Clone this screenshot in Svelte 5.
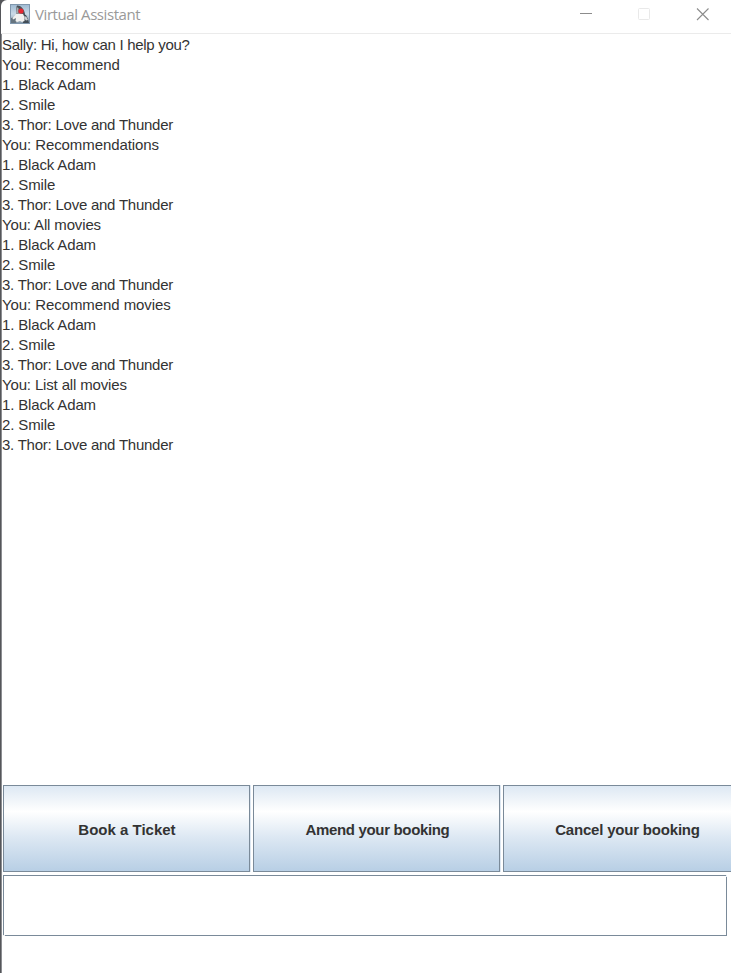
<script>
  const movies = [
    { text: '1. Black Adam', track: -0.15 },
    { text: '2. Smile', track: -0.12 },
    { text: '3. Thor: Love and Thunder', track: -0.24 },
  ];
  const asks = [
    { text: 'You: Recommend', track: -0.06 },
    { text: 'You: Recommendations', track: -0.09 },
    { text: 'You: All movies', track: -0.15 },
    { text: 'You: Recommend movies', track: -0.08 },
    { text: 'You: List all movies', track: -0.15 },
  ];
  const lines = [
    { text: 'Sally: Hi, how can I help you?', track: -0.31 },
    ...asks.flatMap((a) => [a, ...movies]),
  ];
  const actions = [
    { text: 'Book a Ticket', track: 0 },
    { text: 'Amend your booking', track: -0.34 },
    { text: 'Cancel your booking', track: -0.2 },
  ];
</script>

<div class="window">
  <header>
    <svg class="logo" width="20" height="20" viewBox="0 0 20 20">
      <defs>
        <linearGradient id="sky" x1="0" y1="0" x2="0" y2="1">
          <stop offset="0" stop-color="#9db9d2" />
          <stop offset=".5" stop-color="#cbdae6" />
          <stop offset="1" stop-color="#8194a6" />
        </linearGradient>
      </defs>
      <rect x=".5" y=".5" width="19" height="19" fill="url(#sky)" stroke="#8097ad" />
      <path d="M1 14 5 13 7 16 6 19 1 19Z" fill="#66747f" />
      <path d="M13 10 16 11 18 15 19 19 13 19Z" fill="#414c56" />
      <path d="M7 1.5C10 1 14 4 15 10L15 13 12 11 6 10 6 4Z" fill="#4b5157" />
      <path d="M6.5 3 8.5 4 8.5 9 6 10Z" fill="#a3abb1" />
      <path d="M6 10 9 9.5 13 10 14.5 13 14.5 17 12 18 10 17 7 18 5.5 17 6 14 3 15.5 2.5 14 4.5 12Z" fill="#f1f1ef" />
      <path d="M14.5 12 16.5 13 18 16 16 16.5 14.5 14.5Z" fill="#cdd1d3" />
      <circle cx="11" cy="7" r="2.6" fill="#e62832" />
    </svg>
    <span class="title">Virtual Assistant</span>
    <svg class="controls" width="124" height="14" viewBox="0 0 124 14" fill="none">
      <path d="M0 6.5H12" stroke="#8c8c8c" />
      <rect x="58.5" y="1.5" width="11" height="11" rx="1" stroke="#e9e9e9" />
      <path d="M117 1.5 128.5 13M128.5 1.5 117 13" stroke="#8c8c8c" stroke-width="1.1" />
    </svg>
  </header>
  <main>
    <div class="chat">
      {#each lines as line}<div style:letter-spacing="{line.track}px">{line.text}</div>{/each}
    </div>
    <div class="actions">
      {#each actions as action}
        <button style:letter-spacing="{action.track}px">{action.text}</button>
      {/each}
    </div>
    <div class="field"><input type="text" aria-label="Message" /></div>
  </main>
</div>

<style>
  :global(body) { background: #55565a; }
  .window {
    width: 731px; height: 973px; overflow: hidden;
    display: flex; flex-direction: column;
    font-family: "Liberation Sans", Arial, sans-serif;
  }
  header {
    flex: none; box-sizing: border-box; height: 34px; margin-left: 1px;
    padding-left: 9px; display: flex; align-items: flex-start;
    background: #fff; border-bottom: 1px solid #ebebeb; border-top-left-radius: 6px;
  }
  .logo { margin-top: 4px; flex: none; }
  .title {
    margin: 3px 0 0 5px; flex: 1; font: 15px/22px "Open Sans", sans-serif;
    letter-spacing: -0.42px; color: #999; white-space: nowrap;
  }
  .controls { flex: none; margin: 7px 27px 0 0; overflow: visible; }
  main {
    flex: 1; margin-left: 1px; border-left: 1px solid #8b8d91; background: #fff;
    display: flex; flex-direction: column; min-height: 0;
  }
  .chat {
    flex: none; height: 750px; box-sizing: border-box; padding-top: 1px;
    font-size: 15px; line-height: 20px; color: #333; white-space: pre;
  }
  .actions { display: flex; gap: 3px; padding: 1px 0 0 1px; flex: none; }
  button {
    flex: none; box-sizing: border-box; width: 247px; height: 87px; padding: 2px 0 0 1px;
    border: 1px solid #7a8a99; border-radius: 0; box-shadow: 1px 0 #dce7f2;
    background: linear-gradient(#dde8f3 0%, #fff 30%, #dde8f3 60%, #b8cfe5 100%);
    font: bold 15px/20px "Liberation Sans", Arial, sans-serif; color: #333;
  }
  button + button { padding: 2px 0 0 2px; }
  .field { position: relative; flex: none; width: 724px; height: 61px; margin: 3px 0 0 1px; }
  .field::before, .field::after {
    content: ""; position: absolute; width: 1px; height: 2px; background: #e4edf5;
  }
  .field::before { top: 0; right: 0; }
  .field::after { bottom: 0; left: 0; width: 2px; height: 1px; background: #eee; }
  input {
    display: block; box-sizing: border-box; width: 100%; height: 100%;
    padding: 4px; border: 1px solid #7a8a99; border-radius: 0; outline: none;
    font: 15px "Liberation Sans", Arial, sans-serif; color: #333; background: #fff;
  }
</style>
